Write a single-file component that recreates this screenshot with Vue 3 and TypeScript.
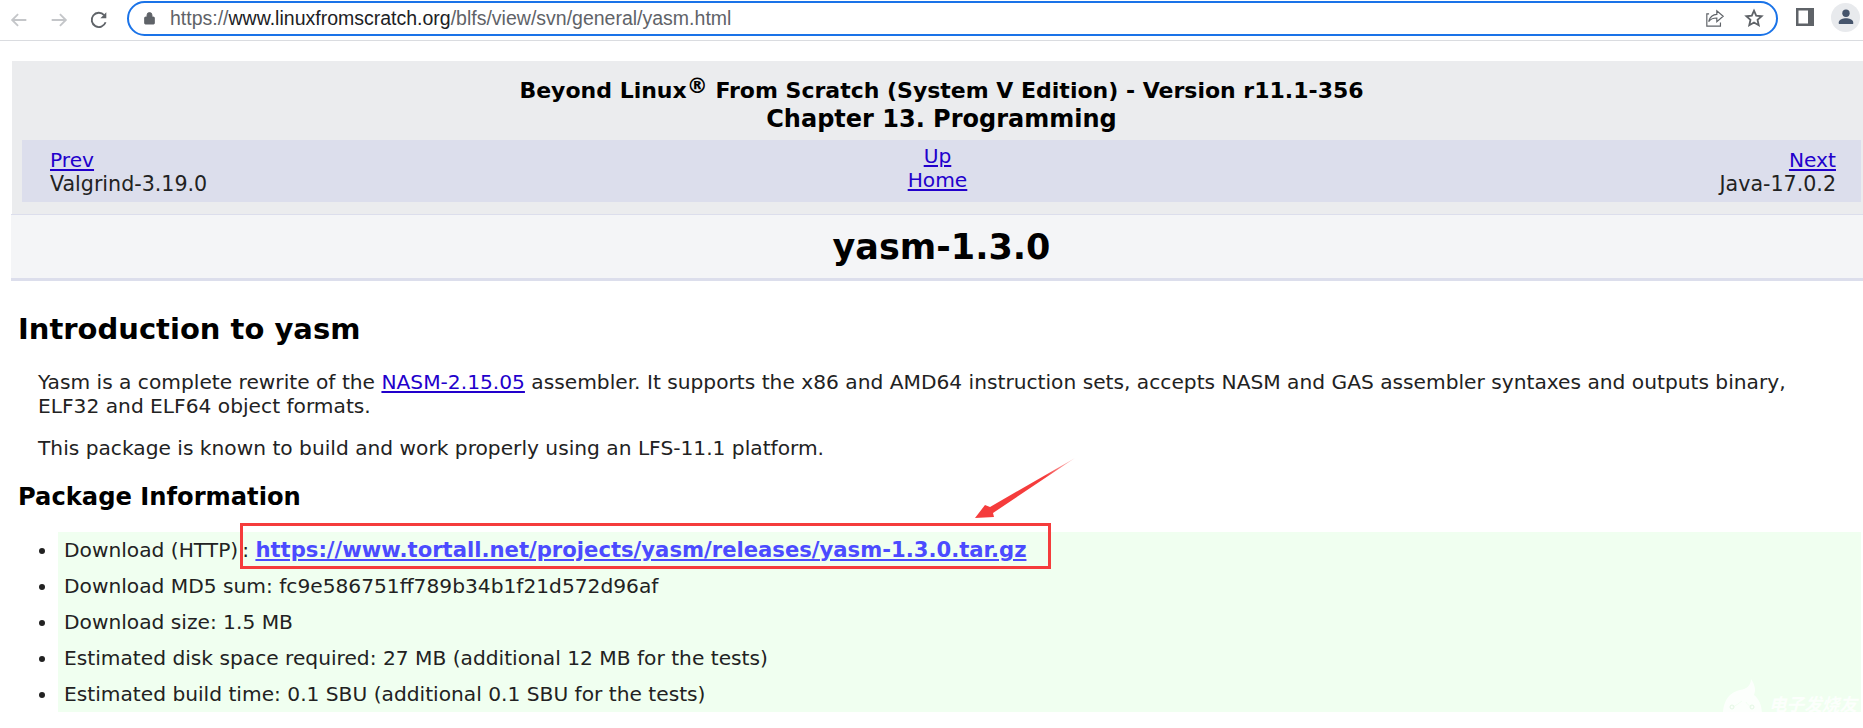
<script setup lang="ts">
const items: string[] = [
  'Download MD5 sum: fc9e586751ff789b34b1f21d572d96af',
  'Download size: 1.5 MB',
  'Estimated disk space required: 27 MB (additional 12 MB for the tests)',
  'Estimated build time: 0.1 SBU (additional 0.1 SBU for the tests)',
]
</script>

<template>
  <div class="page">
    <header class="toolbar">
      <svg class="nav-ic first" viewBox="0 0 24 24"><path d="M20 12H5M11 5.5 4.5 12l6.5 6.5" fill="none" stroke="#c4c6c9" stroke-width="2"/></svg>
      <svg class="nav-ic" viewBox="0 0 24 24"><path d="M4 12h15M13 5.5l6.5 6.500-6.500 6.500" fill="none" stroke="#c4c6c9" stroke-width="2"/></svg>
      <svg class="nav-ic" viewBox="0 0 24 24"><path d="M19.200 14.500A7.800 7.800 0 1 1 17.600 6.600" fill="none" stroke="#5f6368" stroke-width="2"/><path d="M20 3.500V10h-6.500z" fill="#5f6368"/></svg>
      <div class="omnibox">
        <svg class="lock" viewBox="0 0 12 14"><path d="M1.500 6h9a.8.8 0 0 1 .8.8v6a.8.800 0 0 1-.8.800h-9a.8.800 0 0 1-.8-.8v-6a.8.800 0 0 1 .8-.8zM3.300 6V3.800a2.700 2.700 0 0 1 5.400 0V6" fill="#5f6368" stroke="#5f6368"/></svg>
        <span class="url"><span class="dim">https://</span>www.linuxfromscratch.org<span class="dim">/blfs/view/svn/general/yasm.html</span></span>
        <svg class="share" viewBox="0 0 22 22"><path d="M4.500 6.500H2V20h15v-4M4 15c1-5 5-8 9-8V3l7 6-7 6v-4c-4 0-7 1-9 4z" fill="none" stroke="#5f6368" stroke-width="1.300"/></svg>
        <svg class="star" viewBox="0 0 22 22"><path d="m11 3 2.400 5.500 6 .6-4.500 4 1.300 5.900L11 16l-5.200 3 1.300-5.900-4.500-4 6-.6z" fill="none" stroke="#5f6368" stroke-width="2"/></svg>
      </div>
      <svg class="panel" viewBox="0 0 18 18"><path d="M0 0h18v18H0z" fill="#5f6368"/><path d="M2.500 2.500H12v13H2.500z" fill="#fff"/></svg>
      <div class="avatar">
        <svg viewBox="0 0 20 20"><circle cx="10" cy="6.200" r="3.700" fill="#46556c"/><path d="M2.800 17v-1.800c0-2.700 4.500-3.900 7.200-3.900s7.200 1.200 7.200 3.900V17z" fill="#46556c"/></svg>
      </div>
    </header>

    <main class="content">
      <section class="head">
        <h4>Beyond Linux<sup>®</sup> From Scratch (System V Edition) - Version r11.1-356</h4>
        <h3>Chapter 13. Programming</h3>
        <nav class="navbar">
          <div class="nav-l"><a>Prev</a><span>Valgrind-3.19.0</span></div>
          <div class="nav-c"><a>Up</a><a>Home</a></div>
          <div class="nav-r"><a>Next</a><span>Java-17.0.2</span></div>
        </nav>
      </section>
      <section class="title"><h1>yasm-1.3.0</h1></section>

      <h2>Introduction to yasm</h2>
      <p class="para first-para">Yasm is a complete rewrite of the <a>NASM-2.15.05</a> assembler. It supports the x86 and AMD64 instruction sets, accepts NASM and GAS assembler syntaxes and outputs binary, ELF32 and ELF64 object formats.</p>
      <p class="para">This package is known to build and work properly using an LFS-11.1 platform.</p>
      <h3 class="sub">Package Information</h3>

      <ul class="info">
        <li>Download (HTTP)<span class="colon">:</span> <a class="strong">https://www.tortall.net/projects/yasm/releases/yasm-1.3.0.tar.gz</a></li>
        <li v-for="item in items" :key="item">{{ item }}</li>
      </ul>
    </main>

    <div class="redbox"></div>
    <svg class="arrow" viewBox="0 0 110 70">
      <defs>
        <linearGradient id="arrowfade" x1="1" y1="0" x2="0" y2="1">
          <stop offset="0" stop-color="#f53c3c" stop-opacity=".25"/>
          <stop offset=".3" stop-color="#f53c3c"/>
        </linearGradient>
      </defs>
      <path d="M105 3 20 52l-5-2L5 63l19-1-1-4z" fill="url(#arrowfade)"/>
    </svg>
    <div class="watermark">
      <svg viewBox="0 0 40 40">
        <path d="M1 38C1 22 9 15 18 13c7-1 11-5 11-11 4 6 5 11 3 16 5 4 8 10 8 20z" fill="#fff" opacity=".8"/>
        <path d="M10 30c4-1 7-4 10-6M30 30c-3-1-5-3-6-5" fill="none" stroke="#f0fff0" stroke-width=".8"/>
        <circle cx="10" cy="30" r="2" fill="none" stroke="#e4f7e4"/>
        <circle cx="30" cy="30" r="2" fill="none" stroke="#e4f7e4"/>
      </svg>
      <span>电子发烧友</span>
    </div>
  </div>
</template>

<style>
html, body { margin: 0; background: #fff; overflow: hidden; }
</style>

<style scoped>
.page {
  position: relative;
  width: 1863px;
  height: 728px;
  overflow: hidden;
  background: #fff;
  color: #222;
  font-family: "DejaVu Sans", Verdana, sans-serif;
  font-size: 20.2px;
}
.toolbar {
  display: flex;
  align-items: center;
  height: 40px;
  border-bottom: 1px solid #dadce0;
}
.nav-ic { width: 22px; height: 22px; margin-left: 18px; flex: none; }
.nav-ic.first { margin-left: 8px; }
.omnibox {
  display: flex;
  align-items: center;
  box-sizing: border-box;
  width: 1651px;
  height: 35px;
  margin-left: 17px;
  margin-top: -4px;
  padding: 0 12px 0 15px;
  border: 2px solid #1a73e8;
  border-radius: 18px;
}
.lock { width: 11px; height: 14px; flex: none; }
.url {
  flex: 1;
  margin-left: 15px;
  font-family: "Liberation Sans", Arial, sans-serif;
  font-size: 19.5px;
  color: #202124;
}
.dim { color: #5f6368; }
.share { width: 20px; height: 20px; margin-right: 19px; }
.star { width: 20px; height: 20px; }
.panel { width: 18px; height: 18px; margin: -6px 0 0 18px; flex: none; }
.avatar {
  width: 29px;
  height: 29px;
  margin: -6px 0 0 17px;
  border-radius: 50%;
  background: #e8eaed;
  display: flex;
  align-items: center;
  justify-content: center;
  flex: none;
}
.avatar svg { width: 20px; height: 20px; }

.content { padding: 20px 0 0 12px; }
.head {
  background: #ebecee;
  height: 153px;
  box-sizing: border-box;
  padding-top: 17px;
  text-align: center;
  color: #000;
}
.head h4 { margin: 0; padding-left: 8px; font-size: 22px; line-height: 26px; font-weight: 700; }
.head h4 sup { font-size: 21px; line-height: 0; vertical-align: 5px; }
.head h3 { margin: 1px 0 0; padding-left: 8px; font-size: 24px; line-height: 28px; font-weight: 700; }
.navbar {
  display: grid;
  grid-template-columns: 1fr 1fr 1fr;
  margin: 7px 2px 0 10px;
  height: 62px;
  box-sizing: border-box;
  padding: 8px 25px 0 28px;
  background: #dcdeec;
  line-height: 24px;
  color: #222;
  font-size: 20.2px;
  font-weight: 400;
}
.nav-l, .nav-c, .nav-r { display: flex; flex-direction: column; }
.nav-l { align-items: flex-start; }
.nav-l span, .nav-r span { font-size: 20.6px; }
.nav-c { align-items: center; margin-top: -4px; padding-right: 11px; }
.nav-r { align-items: flex-end; }
a { color: #2200cc; text-decoration: underline; }
.title {
  background: #f4f5f7;
  height: 67px;
  box-sizing: border-box;
  margin-left: -1px;
  padding-left: 9px;
  border-top: 1px solid #dcdeec;
  border-bottom: 3px solid #dcdeec;
  display: flex;
  align-items: center;
  justify-content: center;
}
.title h1 { margin: 0; font-size: 35px; line-height: 38px; color: #000; font-weight: 700; }
h2 {
  margin: 31px 0 0 6px;
  font-size: 29px;
  line-height: 34px;
  font-weight: 700;
  color: #000;
}
.para { margin: 0 24px 0 26px; line-height: 24px; }
.first-para { margin-top: 24px; }
.para + .para { margin-top: 18px; }
.sub {
  margin: 23px 0 0 6px;
  font-size: 24.2px;
  line-height: 28px;
  font-weight: 700;
  color: #000;
}
.info {
  margin: 21px 2px 0 46px;
  padding: 0;
  height: 180px;
  background: #f0fff0;
}
.info li { line-height: 36px; padding-left: 6px; }
.colon { margin-left: 4px; }
.strong { font-weight: 700; font-size: 21.15px; color: #4b4bff; }
.redbox {
  position: absolute;
  left: 240px;
  top: 523px;
  width: 811px;
  height: 46px;
  box-sizing: border-box;
  border: 3px solid #f53c3c;
}
.arrow {
  position: absolute;
  left: 970px;
  top: 455px;
  width: 110px;
  height: 70px;
}
.watermark {
  position: absolute;
  left: 1722px;
  top: 677px;
  display: flex;
  align-items: flex-start;
  color: rgba(255,255,255,.85);
  font-family: "Noto Sans CJK SC", sans-serif;
  font-size: 17.6px;
  line-height: 20px;
  font-weight: 700;
  font-style: italic;
}
.watermark svg { width: 40px; height: 40px; margin-right: 7px; }
.watermark span { margin-top: 17px; }
</style>
